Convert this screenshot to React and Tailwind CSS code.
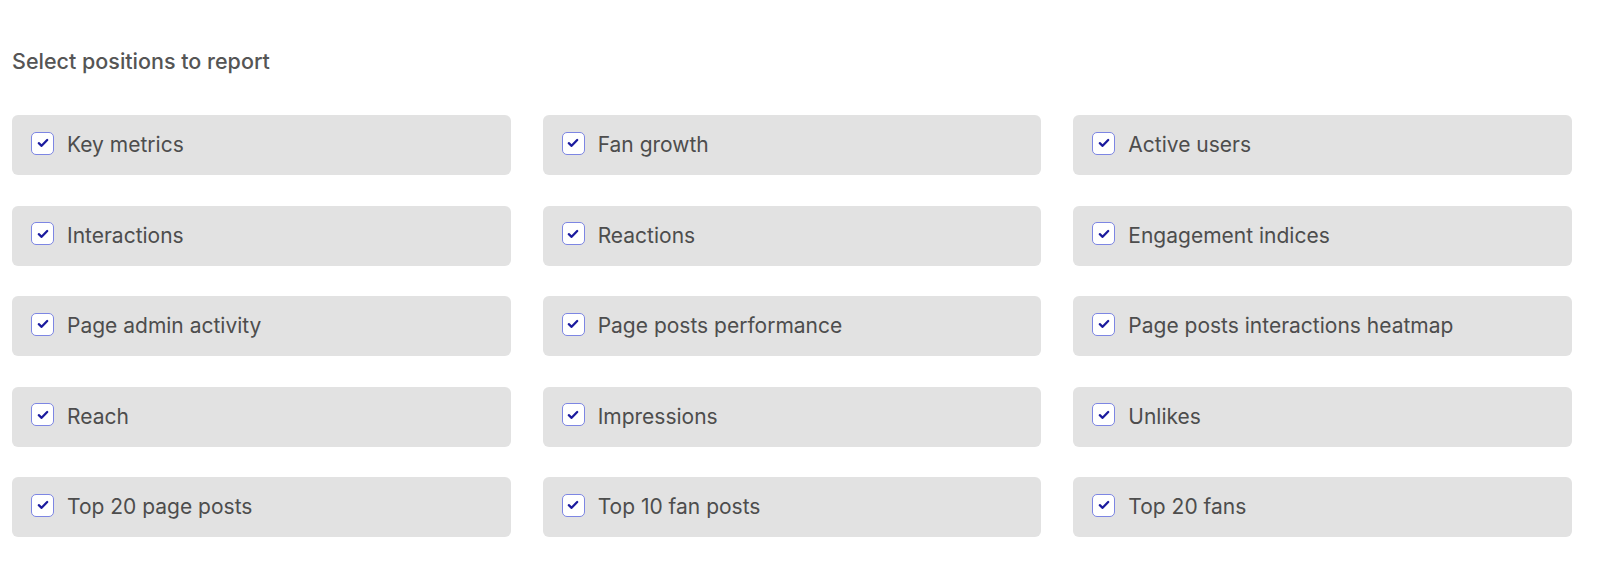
import React from "react";

const items = [
  "Key metrics",
  "Fan growth",
  "Active users",
  "Interactions",
  "Reactions",
  "Engagement indices",
  "Page admin activity",
  "Page posts performance",
  "Page posts interactions heatmap",
  "Reach",
  "Impressions",
  "Unlikes",
  "Top 20 page posts",
  "Top 10 fan posts",
  "Top 20 fans",
];

function Check() {
  return (
    <span className="flex h-[23px] w-[23px] shrink-0 items-center justify-center rounded-[5px] border border-[#7d86e3] bg-white -translate-y-[2px]">
      <svg width="12" height="10" viewBox="0 0 12 10" fill="none">
        <path d="M1.8 5.2 L4.6 7.8 L10.2 2" stroke="#1b1b9e" strokeWidth="2.3" strokeLinecap="round" strokeLinejoin="round" />
      </svg>
    </span>
  );
}

export default function App() {
  return (
    <div className="min-h-[587px] w-full bg-white px-3 pt-[47px]" style={{ fontFamily: "Inter, 'Noto Sans', sans-serif" }}>
      <h2 className="text-[21.5px] font-medium leading-[28px] text-[#555555]">Select positions to report</h2>
      <div className="mt-[40px] grid w-[1560px] grid-cols-3 gap-x-8 gap-y-[30.5px]">
        {items.map((t) => (
          <label key={t} className="flex h-[60px] items-center gap-[13px] rounded-md bg-[#e2e2e2] pl-[19px]">
            <Check />
            <span className="text-[21px] text-[#4d4d4d]">{t}</span>
          </label>
        ))}
      </div>
    </div>
  );
}
